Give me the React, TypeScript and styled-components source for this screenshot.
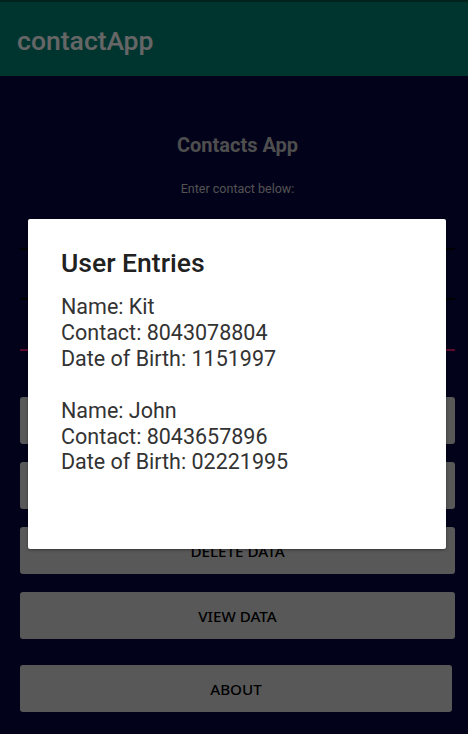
import React, { FC, Fragment } from 'react'
import styled, { createGlobalStyle } from 'styled-components'

const GlobalStyle = createGlobalStyle`
  html, body {
    margin: 0;
    padding: 0;
    background: #02021a;
  }
  body {
    font-family: Roboto, "Noto Sans", "Liberation Sans", sans-serif;
  }
`

const Screen = styled.div`
  position: relative;
  width: 468px;
  height: 734px;
  overflow: hidden;
  background: #050541;
  display: flex;
  flex-direction: column;
`
const StatusBar = styled.div`
  height: 2px;
  background: #00574b;
`
const Toolbar = styled.header`
  height: 74px;
  background: #008577;
  display: flex;
  align-items: center;
  padding: 3px 0 0 17px;
  box-sizing: border-box;
  color: #ffffff;
  font-family: "Roboto Medium", Roboto, sans-serif;
  font-size: 26.5px;
  font-weight: 500;
`
const Content = styled.main`
  display: flex;
  flex-direction: column;
  padding: 0 13px 0 20px;
`
const Heading = styled.h1`
  margin: 57px 0 0;
  text-align: center;
  font-size: 20px;
  line-height: 24px;
  font-weight: 700;
  color: #c4c4c4;
`
const Hint = styled.p`
  margin: 24px 0 0;
  text-align: center;
  font-size: 12.5px;
  line-height: 16px;
  font-weight: 400;
  color: #cccccc;
`
const Fields = styled.div`
  margin-top: 3px;
  display: flex;
  flex-direction: column;
`
const Field = styled.div<{ focused?: boolean }>`
  height: ${(p) => (p.focused ? '51px' : '50px')};
  border-bottom: 2px solid ${(p) => (p.focused ? '#e8196e' : '#000000')};
  box-sizing: border-box;
`
const Buttons = styled.div`
  margin-top: 46px;
  display: flex;
  flex-direction: column;
  gap: 18px;
`
const Button = styled.button<{ narrow?: boolean }>`
  height: 47px;
  margin-right: ${(p) => (p.narrow ? '3px' : '0')};
  margin-top: ${(p) => (p.narrow ? '8px' : '0')};
  border: none;
  border-radius: 3px;
  background: #dcdcdc;
  color: #000000;
  font-family: "Noto Sans", "Open Sans", sans-serif;
  font-size: 15.2px;
  font-weight: 500;
  text-transform: uppercase;
  padding: 0;
`
const Scrim = styled.div`
  position: absolute;
  inset: 0;
  background: rgba(0, 0, 0, 0.6);
`
const Dialog = styled.div`
  position: absolute;
  left: 28px;
  top: 219px;
  width: 418px;
  height: 330px;
  box-sizing: border-box;
  padding: 28px 33px 0;
  background: #ffffff;
  border-radius: 2px;
  box-shadow: 0 1px 3px rgba(0, 0, 0, 0.4);
`
const DialogTitle = styled.h2`
  margin: 0;
  font-family: "Roboto Medium", Roboto, sans-serif;
  font-size: 26.5px;
  line-height: 32px;
  font-weight: 500;
  color: #212121;
`
const DialogBody = styled.p`
  margin: 15px 0 0;
  white-space: pre-line;
  font-size: 21.5px;
  line-height: 25.9px;
  color: #333333;
`

const entries = [
  { name: 'Kit', contact: '8043078804', dob: '1151997' },
  { name: 'John', contact: '8043657896', dob: '02221995' },
]

const App: FC = () => {
  const message = entries
    .map((e) => `Name: ${e.name}\nContact: ${e.contact}\nDate of Birth: ${e.dob}`)
    .join('\n\n')

  return (
    <Fragment>
      <GlobalStyle />
      <Screen>
        <StatusBar />
        <Toolbar>contactApp</Toolbar>
        <Content>
          <Heading>Contacts App</Heading>
          <Hint>Enter contact below:</Hint>
          <Fields>
            <Field />
            <Field />
            <Field focused />
          </Fields>
          <Buttons>
            <Button>Add Data</Button>
            <Button>Update Data</Button>
            <Button>Delete Data</Button>
            <Button>View Data</Button>
            <Button narrow>About</Button>
          </Buttons>
        </Content>
        <Scrim />
        <Dialog>
          <DialogTitle>User Entries</DialogTitle>
          <DialogBody>{message}</DialogBody>
        </Dialog>
      </Screen>
    </Fragment>
  )
}

export default App
